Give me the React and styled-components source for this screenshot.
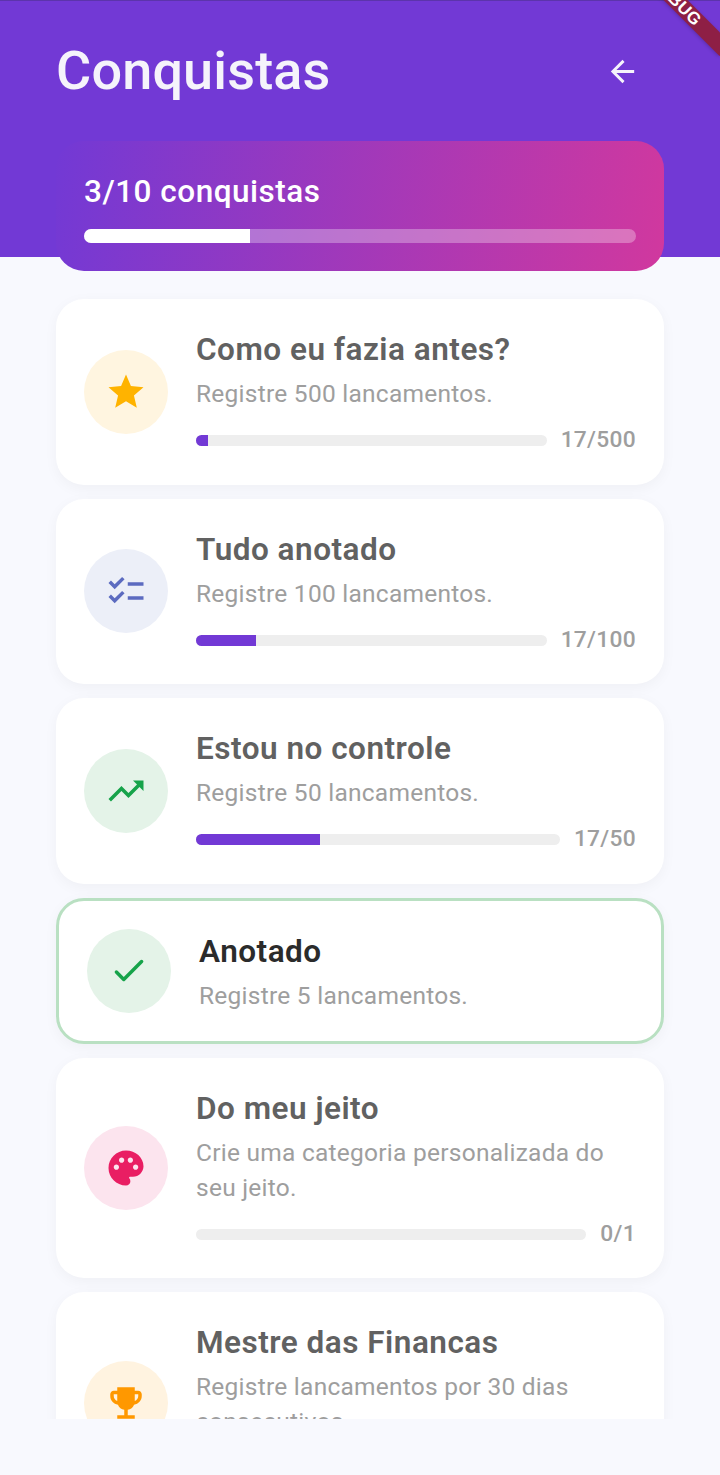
import styled, { createGlobalStyle } from "styled-components";
import {
  MdArrowBack,
  MdChecklist,
  MdEmojiEvents,
  MdPalette,
  MdStar,
  MdTrendingUp,
} from "react-icons/md";

const GlobalStyle = createGlobalStyle`
  html, body {
    margin: 0;
    padding: 0;
    background: #f8f9fe;
  }
  * {
    box-sizing: border-box;
  }
`;

const Page = styled.div`
  position: relative;
  width: 720px;
  height: 1475px;
  overflow: hidden;
  display: flex;
  flex-direction: column;
  background: #f8f9fe;
  font-family: Roboto, "Noto Sans", sans-serif;
`;

const Header = styled.header`
  position: relative;
  z-index: 1;
  height: 257px;
  flex: none;
  padding: 0 56px;
  background: #7239d5;
  border-top: 1px solid #5c34ab;
`;

const TopRow = styled.div`
  height: 140px;
  display: flex;
  align-items: flex-start;
  justify-content: space-between;
`;

const PageTitle = styled.h1`
  margin: 39px 0 0;
  font-size: 54px;
  line-height: 62px;
  font-weight: 500;
  letter-spacing: 0.15px;
  color: #f5f3fb;
`;

const BackButton = styled.button`
  margin: 48px 20px 0 0;
  padding: 0;
  width: 44px;
  height: 44px;
  border: 0;
  background: none;
  color: #f5f3fb;
  display: flex;
  align-items: center;
  justify-content: center;
`;

const SummaryCard = styled.section`
  height: 130px;
  padding: 28px;
  border-radius: 28px;
  background: linear-gradient(100deg, #7239d5 0%, #d1389e 100%);
`;

const SummaryText = styled.div`
  font-size: 31.5px;
  line-height: 46px;
  font-weight: 500;
  letter-spacing: 0.5px;
  color: #fff;
`;

const SummaryTrack = styled.div`
  margin-top: 14px;
  height: 14px;
  border-radius: 7px;
  overflow: hidden;
  background: rgba(255, 255, 255, 0.3);
`;

const SummaryFill = styled.div`
  height: 100%;
  background: #fff;
`;

const Ribbon = styled.div`
  position: absolute;
  z-index: 2;
  top: -8px;
  right: -26px;
  width: 140px;
  height: 17px;
  transform: rotate(45deg);
  background: #8e1f45;
  box-shadow: 0 1px 4px rgba(0, 0, 0, 0.2);
  color: #fff;
  font-family: "Liberation Sans", sans-serif;
  font-size: 17px;
  line-height: 17px;
  font-weight: 700;
  letter-spacing: 0.5px;
  text-align: center;
`;

const List = styled.main`
  height: 1162px;
  flex: none;
  overflow: hidden;
  padding: 42px 56px 0;
  display: flex;
  flex-direction: column;
  gap: 14.1px;
`;

const Card = styled.article`
  flex: none;
  display: flex;
  align-items: center;
  gap: 28px;
  padding: 28px;
  border-radius: 28px;
  background: #fff;
  border: ${(p) => (p.$done ? "3.5px solid #b9e0c2" : "0")};
  box-shadow: 0 3.5px 14px rgba(0, 0, 0, 0.04);
`;

const IconCircle = styled.div`
  flex: none;
  width: 84px;
  height: 84px;
  border-radius: 50%;
  display: flex;
  align-items: center;
  justify-content: center;
  background: ${(p) => p.$bg};
  color: ${(p) => p.$fg};
`;

const CardBody = styled.div`
  flex: 1;
  min-width: 0;
`;

const CardTitle = styled.h2`
  margin: 0;
  font-size: 31.5px;
  line-height: 45px;
  font-weight: 600;
  letter-spacing: 0.5px;
  color: ${(p) => (p.$done ? "#2b2b2b" : "#616161")};
`;

const CardText = styled.p`
  margin: 4px 0 0;
  font-size: 24.5px;
  line-height: 35px;
  font-weight: 400;
  letter-spacing: 0.25px;
  color: #9e9e9e;
`;

const ProgressRow = styled.div`
  margin-top: 13.5px;
  height: 32px;
  display: flex;
  align-items: center;
  gap: 14px;
`;

const ProgressTrack = styled.div`
  flex: 1;
  height: 11px;
  border-radius: 6px;
  overflow: hidden;
  background: #eeeeee;
`;

const ProgressFill = styled.div`
  height: 100%;
  background: #7239d5;
`;

const ProgressCount = styled.span`
  margin-top: -2px;
  font-size: 22.75px;
  font-weight: 500;
  letter-spacing: 0.3px;
  color: #9e9e9e;
`;

const CheckIcon = () => (
  <svg width="42" height="42" viewBox="0 0 24 24" fill="none">
    <path
      d="M4.8 12.6 9 16.8 19.2 6.6"
      stroke="currentColor"
      strokeWidth="2"
      strokeLinecap="round"
      strokeLinejoin="round"
    />
  </svg>
);

const achievements = [
  {
    title: "Como eu fazia antes?",
    text: "Registre 500 lancamentos.",
    current: 17,
    total: 500,
    bg: "#fff5e0",
    fg: "#ffb300",
    icon: <MdStar size={42} />,
  },
  {
    title: "Tudo anotado",
    text: "Registre 100 lancamentos.",
    current: 17,
    total: 100,
    bg: "#eceff8",
    fg: "#5c6bc0",
    icon: <MdChecklist size={42} />,
  },
  {
    title: "Estou no controle",
    text: "Registre 50 lancamentos.",
    current: 17,
    total: 50,
    bg: "#e4f3e8",
    fg: "#16a34a",
    icon: <MdTrendingUp size={42} />,
  },
  {
    title: "Anotado",
    text: "Registre 5 lancamentos.",
    done: true,
    bg: "#e4f3e8",
    fg: "#16a34a",
    icon: <CheckIcon />,
  },
  {
    title: "Do meu jeito",
    text: "Crie uma categoria personalizada do seu jeito.",
    current: 0,
    total: 1,
    bg: "#fce4ee",
    fg: "#e91e63",
    icon: <MdPalette size={42} />,
  },
  {
    title: "Mestre das Financas",
    text: "Registre lancamentos por 30 dias consecutivos.",
    current: 0,
    total: 30,
    bg: "#fff3e0",
    fg: "#ff9800",
    icon: <MdEmojiEvents size={42} />,
  },
];

const App = () => {
  return (
    <Page>
      <GlobalStyle />
      <Header>
        <TopRow>
          <PageTitle>Conquistas</PageTitle>
          <BackButton aria-label="Voltar">
            <MdArrowBack size={35} />
          </BackButton>
        </TopRow>
        <SummaryCard>
          <SummaryText>3/10 conquistas</SummaryText>
          <SummaryTrack>
            <SummaryFill style={{ width: "30%" }} />
          </SummaryTrack>
        </SummaryCard>
      </Header>
      <Ribbon>DEBUG</Ribbon>
      <List>
        {achievements.map((a) => (
          <Card key={a.title} $done={a.done}>
            <IconCircle $bg={a.bg} $fg={a.fg}>
              {a.icon}
            </IconCircle>
            <CardBody>
              <CardTitle $done={a.done}>{a.title}</CardTitle>
              <CardText>{a.text}</CardText>
              {!a.done && (
                <ProgressRow>
                  <ProgressTrack>
                    <ProgressFill
                      style={{ width: `${(a.current / a.total) * 100}%` }}
                    />
                  </ProgressTrack>
                  <ProgressCount>
                    {a.current}/{a.total}
                  </ProgressCount>
                </ProgressRow>
              )}
            </CardBody>
          </Card>
        ))}
      </List>
    </Page>
  );
};

export default App;
